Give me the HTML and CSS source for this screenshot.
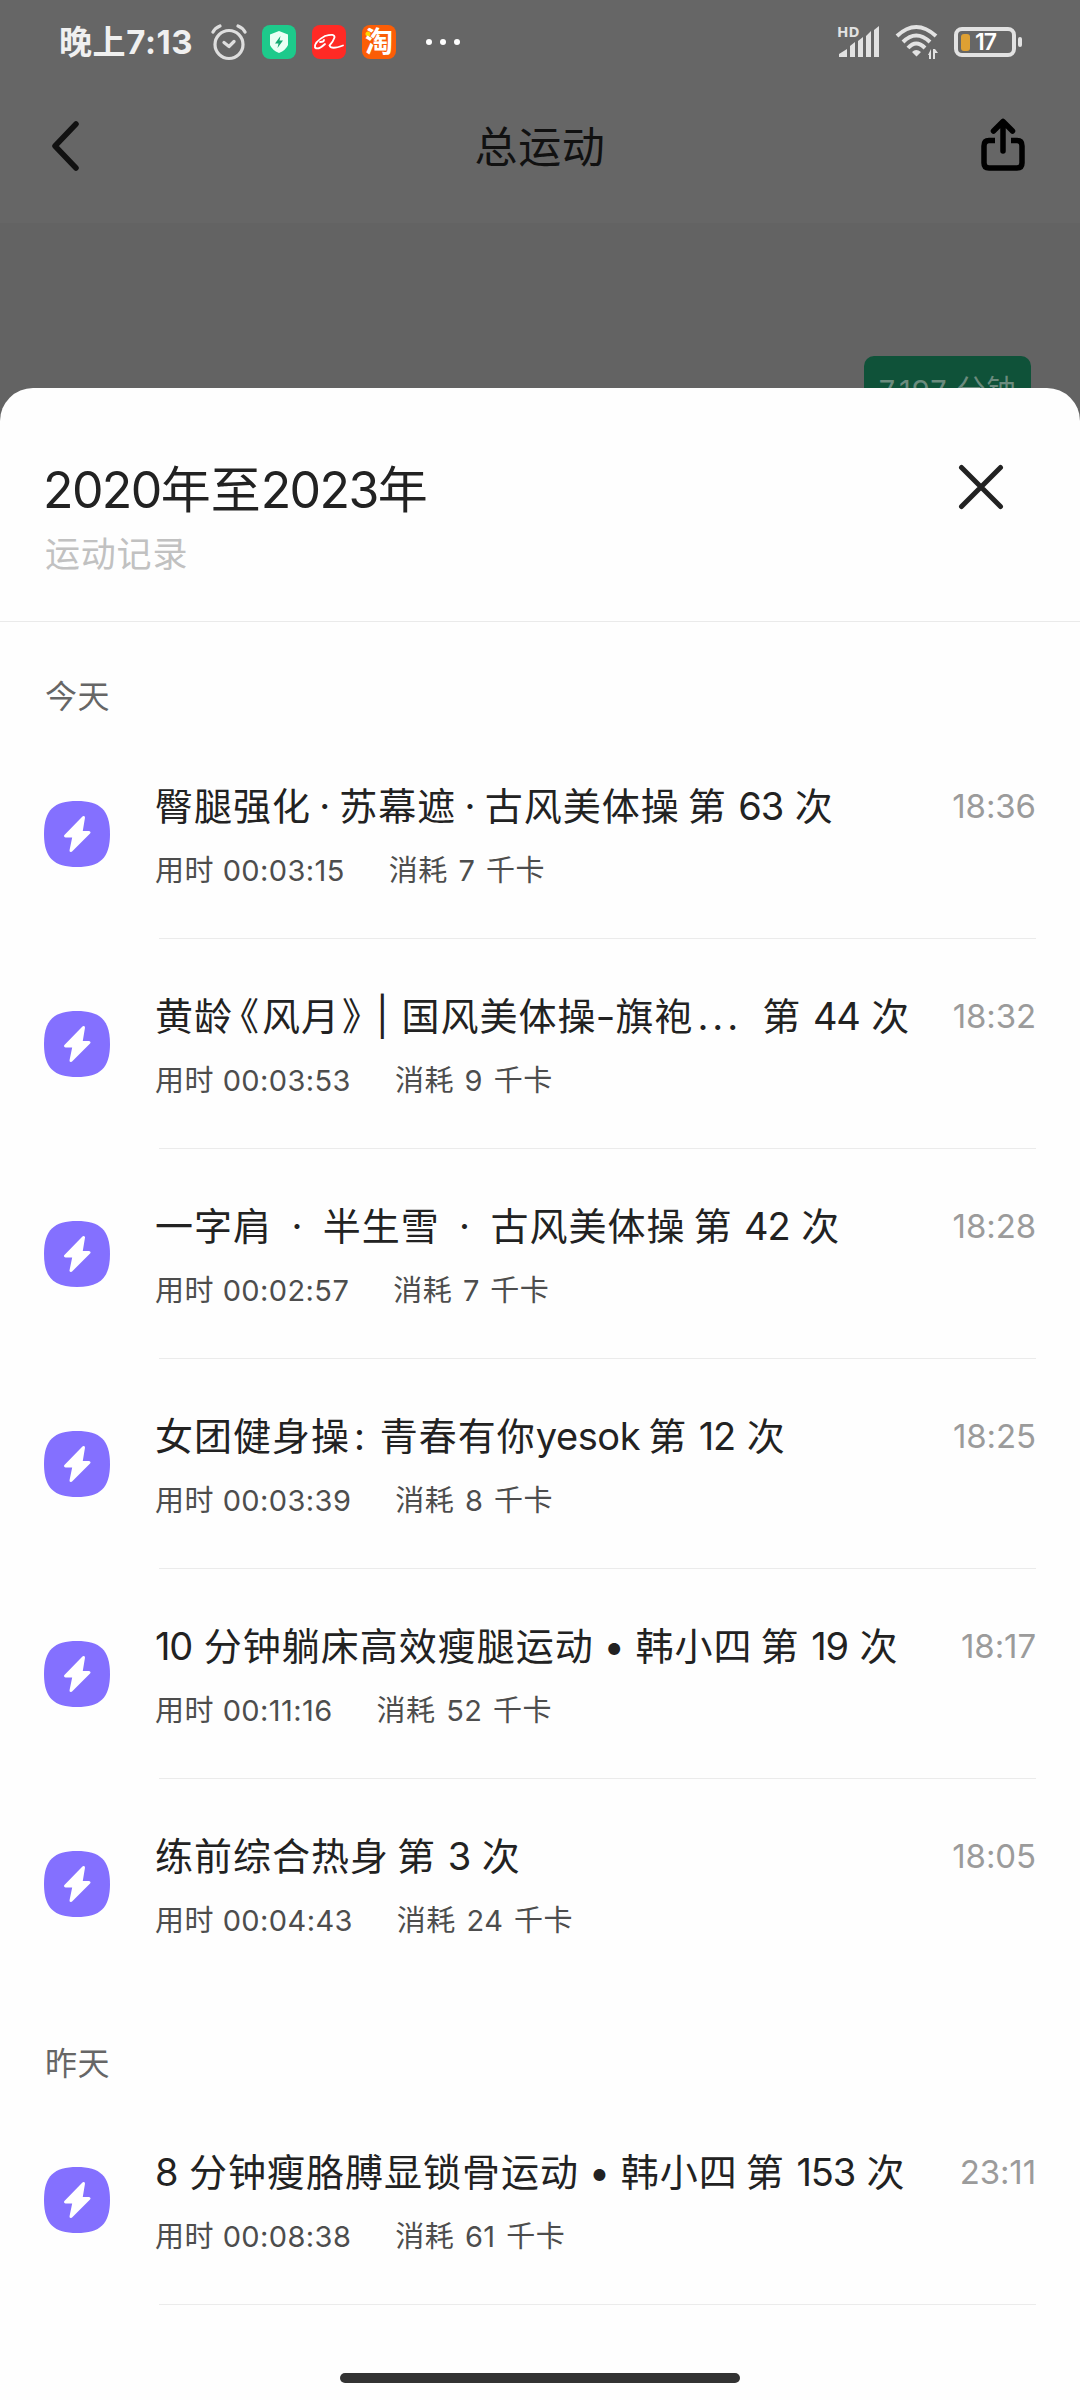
FILE: index.html
```html
<!DOCTYPE html>
<html lang="zh-CN">
<head>
<meta charset="utf-8">
<title>总运动</title>
<link rel="stylesheet" href="styles.css">
</head>
<body>
<svg class="defs" width="0" height="0" aria-hidden="true">
  <symbol id="bolt" viewBox="0 0 66 66">
    <path d="M33 0C56 0 66 9 66 33S56 66 33 66 0 57 0 33 10 0 33 0Z" fill="#8470ff"/>
    <path d="M39.500 16.500 21.500 35H30L27 49.500 45 31.500H37Z" fill="#fff" stroke="#fff" stroke-width="3" stroke-linejoin="round"/>
  </symbol>
</svg>
<div class="phone">
  <header class="statusbar">
    <span class="clock">晚上7:13</span>
    <svg class="s-alarm" width="36" height="38" viewBox="0 0 36 38" fill="none" stroke="#dedede" stroke-width="3.200" stroke-linecap="round" stroke-linejoin="round"><circle cx="18" cy="21.500" r="14"/><path d="M13 19.500 18 23.500 23 18.500M2 9Q4 5 9 3M34 9Q32 5 27 3"/></svg>
    <svg class="s-app" width="34" height="34" viewBox="0 0 34 34"><rect width="34" height="34" rx="8" fill="#1dca8b"/><path d="M17 6 26 9.500V20Q24 25 17 28 10 25 8 20V9.500Z" fill="#eafff5"/><path d="M18.500 11 13 18.500H16.500L15.500 23 21 15.500H17.500Z" fill="#14a872"/></svg>
    <svg class="s-app" width="34" height="34" viewBox="0 0 34 34"><rect width="34" height="34" rx="8" fill="#ff2a25"/><path d="M13 11Q2 17 3 22.500 6 25.500 13 19M8 17Q12 17 12 15M13 11Q23 8 22.500 12.500 21 17 17.500 20.500 19 25 31 20.500" fill="none" stroke="#fff" stroke-width="1.800" stroke-linecap="round"/></svg>
    <span class="taobao">淘</span>
    <span class="dots"><i></i><i></i><i></i></span>
    <span class="spacer"></span>
    <svg class="s-signal" width="43" height="36" viewBox="0 0 43 36" fill="#e2e2e2"><text class="hd" x="0" y="13">HD</text><path d="M2 33V30L10 25V33ZM13 33V22L18 18V33ZM21 33V17L26 13V33ZM29 33V12L34 7V33ZM37 33V6L42 2V33Z"/></svg>
    <svg class="s-wifi" width="44" height="36" viewBox="0 0 44 36"><g fill="none" stroke="#e2e2e2" stroke-width="4"><path d="M2 12Q21-6 41 12M8 18Q21 5 35 18M13 24Q21 15 30 24"/></g><path d="M17 28Q21 24 26 28L21.500 32.500ZM33 31 36 25V35H34V31ZM38 25H40L43 29H40V35H38Z" fill="#e2e2e2"/></svg>
    <span class="battery"><i></i><b>17</b></span>
  </header>
  <nav class="navbar">
    <svg width="28" height="50" viewBox="0 0 28 50" fill="none" stroke="#111" stroke-width="5.500" stroke-linecap="round" stroke-linejoin="round"><path d="M25 3 4 25 25 47"/></svg>
    <h1>总运动</h1>
    <svg width="44" height="53" viewBox="0 0 44 53" fill="none" stroke="#000" stroke-width="5.500" stroke-linecap="round" stroke-linejoin="round"><path d="M22 4V33M12.500 13 22 3.500 31.500 13"/><path stroke-linecap="butt" d="M14 22.500H8Q3 22.500 3 28V45Q3 50 8 50H36Q41 50 41 45V28Q41 22.500 36 22.500H30"/></svg>
  </nav>
  <div class="backdrop"><div class="total">7,197 分钟</div></div>
  <main class="sheet">
    <div class="sheet-head">
      <div>
        <h2><span class="n">2020</span>年至<span class="n">2023</span>年</h2>
        <p>运动记录</p>
      </div>
      <svg width="46" height="46" viewBox="0 0 46 46" stroke="#222" stroke-width="5" stroke-linecap="round"><path d="M3.500 3.500 42.500 42.500M42.500 3.500 3.500 42.500"/></svg>
    </div>
    <h3>今天</h3>
    <ul>
      <li><svg class="bolt"><use href="#bolt"/></svg><div class="body"><div class="top"><span class="name dotted">臀腿强化 · 苏幕遮 · 古风美体操</span><span class="count">第 <span class="n">63</span> 次</span><time>18:36</time></div><div class="meta"><span>用时 <span class="n">00:03:15</span></span><span class="kcal">消耗 <span class="n">7</span> 千卡</span></div></div></li>
      <li><svg class="bolt"><use href="#bolt"/></svg><div class="body"><div class="top"><span class="name">黄龄<span class="open-mark">《</span>风月<span class="close-mark">》</span>| 国风美体操<span class="dash">–</span>旗袍<span class="more">...</span></span><span class="count">第 <span class="n">44</span> 次</span><time>18:32</time></div><div class="meta"><span>用时 <span class="n">00:03:53</span></span><span class="kcal">消耗 <span class="n">9</span> 千卡</span></div></div></li>
      <li><svg class="bolt"><use href="#bolt"/></svg><div class="body"><div class="top"><span class="name spaced">一字肩&nbsp; ·&nbsp; 半生雪&nbsp; ·&nbsp; 古风美体操</span><span class="count">第 <span class="n">42</span> 次</span><time>18:28</time></div><div class="meta"><span>用时 <span class="n">00:02:57</span></span><span class="kcal">消耗 <span class="n">7</span> 千卡</span></div></div></li>
      <li><svg class="bolt"><use href="#bolt"/></svg><div class="body"><div class="top"><span class="name">女团健身操<span class="colon">:</span> 青春有你<span class="latin">yesok</span></span><span class="count">第 <span class="n">12</span> 次</span><time>18:25</time></div><div class="meta"><span>用时 <span class="n">00:03:39</span></span><span class="kcal">消耗 <span class="n">8</span> 千卡</span></div></div></li>
      <li><svg class="bolt"><use href="#bolt"/></svg><div class="body"><div class="top"><span class="name"><span class="n">10</span> 分钟躺床高效瘦腿运动 <span class="bullet">•</span> 韩小四</span><span class="count">第 <span class="n">19</span> 次</span><time>18:17</time></div><div class="meta"><span>用时 <span class="n">00:11:16</span></span><span class="kcal">消耗 <span class="n">52</span> 千卡</span></div></div></li>
      <li><svg class="bolt"><use href="#bolt"/></svg><div class="body"><div class="top"><span class="name">练前综合热身</span><span class="count">第 <span class="n">3</span> 次</span><time>18:05</time></div><div class="meta"><span>用时 <span class="n">00:04:43</span></span><span class="kcal">消耗 <span class="n">24</span> 千卡</span></div></div></li>
    </ul>
    <h3>昨天</h3>
    <ul class="open">
      <li><svg class="bolt"><use href="#bolt"/></svg><div class="body"><div class="top"><span class="name"><span class="n">8</span> 分钟瘦胳膊显锁骨运动 <span class="bullet">•</span> 韩小四</span><span class="count">第 <span class="n">153</span> 次</span><time>23:11</time></div><div class="meta"><span>用时 <span class="n">00:08:38</span></span><span class="kcal">消耗 <span class="n">61</span> 千卡</span></div></div></li>
    </ul>
    <div class="home"></div>
  </main>
</div>
</body>
</html>
```
FILE: styles.css
```css
* { box-sizing: border-box; margin: 0; padding: 0; }
body { background: #fff; font-family: Inter, "Noto Sans CJK SC", sans-serif; color: #222; }
h1, h2, h3 { font-weight: 400; }
svg { display: block; flex: none; }
.defs { position: absolute; }
.phone { width: 1080px; height: 2400px; background: #636363; display: flex; flex-direction: column; overflow: hidden; }
.statusbar { height: 84px; flex: none; background: #666; display: flex; align-items: center; padding: 0 64px 0 59px; }
.clock { width: 152px; font-size: 33px; line-height: 40px; font-weight: 700; color: #f0f0f0; white-space: nowrap; letter-spacing: .6px; }
.s-alarm { margin-right: 15px; }
.s-app { margin-right: 16px; }
.taobao { width: 34px; height: 34px; border-radius: 8px; background: radial-gradient(circle at 6px 9px, #ffd500 2px, transparent 3px), #fb5d06; color: #fff; font-size: 28px; font-weight: 700; line-height: 35px; text-align: center; }
.dots { display: flex; gap: 8px; margin-left: 30px; }
.dots i { width: 6px; height: 6px; border-radius: 50%; background: #fff; }
.spacer { flex: 1; }
.s-signal { overflow: visible; }
.hd { font: 700 15px "Noto Sans", sans-serif; }
.s-wifi { margin: 0 15px; }
.battery { width: 62px; height: 30px; border: 4px solid #e2e2e2; border-radius: 8px; display: flex; align-items: center; padding-left: 3px; position: relative; }
.battery i { width: 9px; height: 17px; border-radius: 3px; background: #dea033; }
.battery b { font-size: 23px; line-height: 22px; color: #fff; font-weight: 600; margin-left: 5px; letter-spacing: -1px; }
.battery::after { content: ""; position: absolute; right: -10px; top: 6px; width: 4px; height: 10px; border-radius: 2px; background: #e2e2e2; }
.navbar { height: 139px; flex: none; background: #666; display: grid; grid-template-columns: 1fr auto 1fr; align-items: start; padding: 34px 55px 0 51px; color: #111; }
.navbar svg:first-child { margin-top: 3px; }
.navbar svg:last-child { justify-self: end; }
.navbar h1 { padding-left: 4px; font-size: 43px; line-height: 58px; letter-spacing: .6px; }
.backdrop { height: 165px; flex: none; padding: 133px 49px 0 0; }
.total { width: 167px; height: 70px; margin-left: auto; border-radius: 10px; background: #0f5239; color: #6b8b7e; font-size: 29px; line-height: 70px; letter-spacing: .9px; text-align: center; white-space: nowrap; }
.sheet { flex: 1; background: #fefefe; border-radius: 33px 33px 0 0; display: flex; flex-direction: column; position: relative; }
.sheet-head { height: 234px; border-bottom: 1px solid #eaeaea; display: flex; justify-content: space-between; padding: 64px 76px 0 45px; }
.sheet-head svg { margin-top: 12px; }
.sheet-head h2 { margin-left: -2px; font-size: 50px; line-height: 76px; }
.sheet-head h2 .n { letter-spacing: -1.600px; }
.sheet-head p { font-size: 35px; line-height: 52px; letter-spacing: .8px; color: #c1c1c1; }
h3 { height: 107px; padding-left: 45px; padding-top: 51px; font-size: 32px; line-height: 48px; letter-spacing: .5px; color: #666; }
.sheet h3 ~ h3 { height: 106px; }
ul { list-style: none; }
li { height: 210px; display: flex; align-items: center; padding: 0 44px; }
.bolt { width: 66px; height: 66px; }
.body { flex: 1; margin-left: 45px; height: 210px; padding-top: 48px; position: relative; }
.body::after { content: ""; position: absolute; left: 4px; right: 0; bottom: 0; height: 1px; background: #ebebeb; }
ul:not(.open) li:last-child .body::after { display: none; }
.top { display: flex; align-items: center; height: 58px; font-size: 38px; line-height: 58px; letter-spacing: 1px; white-space: nowrap; }
.top .n { letter-spacing: -1.200px; }
.dotted { word-spacing: -3.500px; }
.spaced { word-spacing: -2px; }
.latin { letter-spacing: -.4px; }
.bullet { margin: 0 -2px; }
.count { margin-left: 8px; }
.open-mark, .close-mark { font-feature-settings: "halt"; }
.open-mark { margin: 0 2px 0 7px; }
.close-mark { margin: 0 14px 0 2px; }
.dash { margin: 0 2px; font-size: 28px; font-weight: 600; vertical-align: 3px; line-height: 1; }
.colon { margin: 0 2px 0 4px; }
.more { letter-spacing: 4px; margin: 0 12px 0 4px; }
.top time { margin-left: auto; font-size: 33px; letter-spacing: -.1px; color: #9b9b9b; }
.meta { display: flex; gap: 44px; padding-top: 14px; font-size: 29px; line-height: 44px; letter-spacing: .5px; color: #4d4d4d; }
.meta .n { letter-spacing: .4px; }
.kcal { word-spacing: 2px; }
.home { position: absolute; left: 340px; bottom: 17px; width: 400px; height: 10px; border-radius: 5px; background: #333; }
```
